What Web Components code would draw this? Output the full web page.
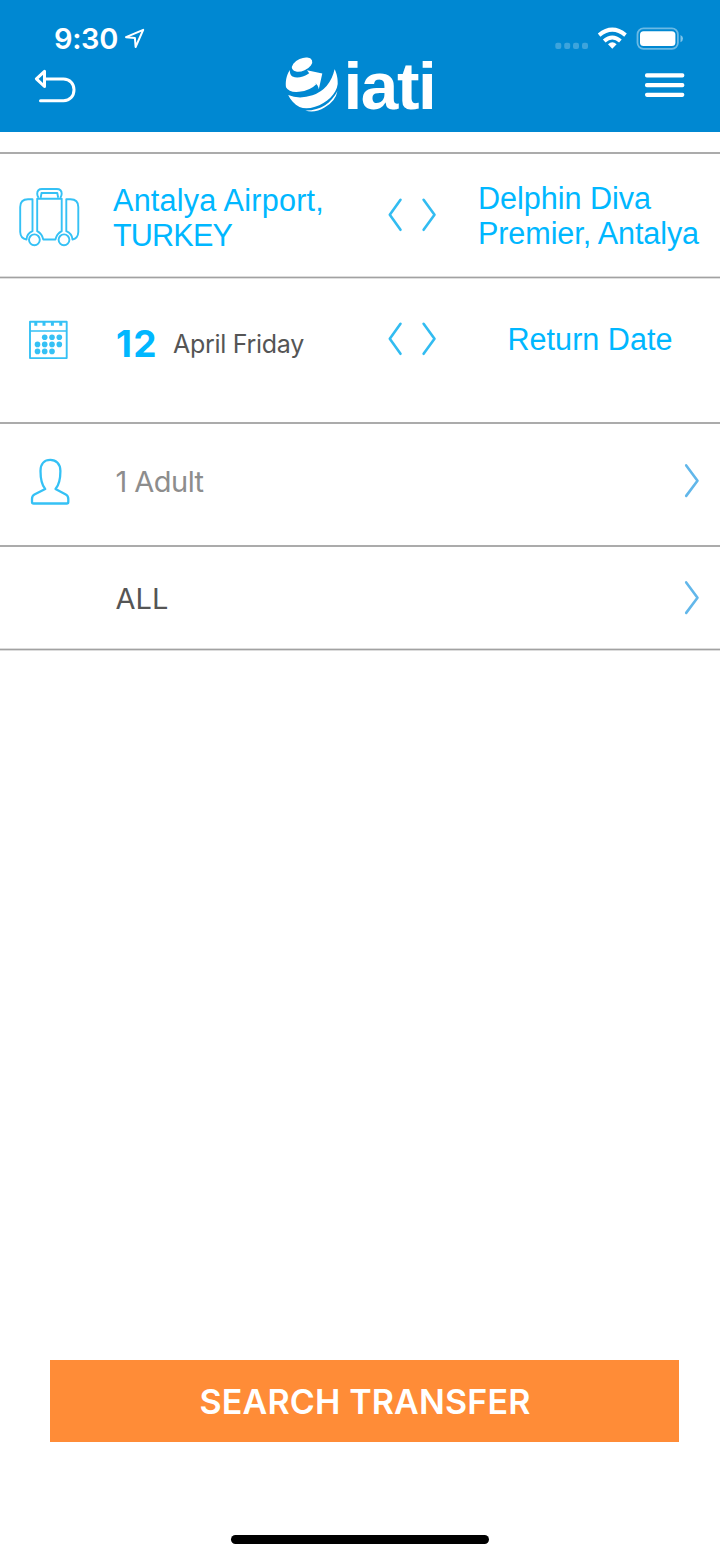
<!DOCTYPE html>
<html lang="en"><head><meta charset="utf-8"><title>iati transfer</title>
<style>html,body{margin:0;padding:0;background:#fff}</style></head><body>
<transfer-page></transfer-page>
<script>
const define=(name,html,ready)=>customElements.define(name,class extends HTMLElement{
  constructor(){super();this.attachShadow({mode:'open'}).innerHTML=html;}
  connectedCallback(){ready&&ready.call(this);}
});

// Label whose tracking is adjusted so that each line has a given advance width.
define('fit-label',`<style>:host{display:block;white-space:nowrap}span{display:inline-block}</style><span><slot></slot></span>`,function(){
  const s=this.shadowRoot.querySelector('span'),w=+this.getAttribute('width'),n=this.textContent.length;
  s.style.letterSpacing=(w-s.getBoundingClientRect().width)/n+'px';
});

define('status-bar',`<style>
:host{display:flex;height:56px;color:#fff;font:600 29px/40px Inter,sans-serif;padding-left:54px;box-sizing:border-box}
fit-label{margin-top:19px;width:64px}
svg{display:block}.loc{margin:27px 0 0 6px}.right{margin:24px 0 0 auto}
</style><fit-label width="64">9:30</fit-label>
<svg class="loc" width="22" height="24" viewBox="124 27 22 24"><path d="M126 37.2 143.2 29.8 135.6 47 134.9 37.9Z" fill="none" stroke="#fff" stroke-width="2" stroke-linejoin="round"/></svg>
<svg class="right" width="170" height="30" viewBox="550 24 170 30">
<g fill="#fff" fill-opacity=".24"><rect x="555.3" y="42.8" width="6" height="6.2" rx="2"/><rect x="564.2" y="42.8" width="6" height="6.2" rx="2"/><rect x="573" y="42.8" width="6" height="6.2" rx="2"/><rect x="582" y="42.8" width="6" height="6.2" rx="2"/></g>
<g fill="none" stroke="#fff" stroke-width="4"><path d="M599.1 35.1Q612.3 24.2 625.5 35.1"/><path d="M604.2 41Q612.3 34 620.4 41"/></g><path d="M608 44.2Q612.3 40.5 616.6 44.2L612.3 48.8Z" fill="#fff"/>
<rect x="637.5" y="28.4" width="40.4" height="20.4" rx="6" fill="none" stroke="#fff" stroke-opacity=".42" stroke-width="1.8"/><rect x="640" y="31.2" width="35.4" height="14.8" rx="3.5" fill="#fff"/><path d="M680.5 35Q683 36 683 38.5T680.5 42.3Z" fill="#fff" fill-opacity=".5"/>
</svg>`);

define('iati-logo',`<style>:host{display:flex;color:#fff;font:700 67.5px/76px "Liberation Sans",sans-serif}svg{display:block}fit-label{margin:-6px 0 0 3.5px}</style>
<svg width="56" height="60" viewBox="284 54 56 60" fill="#fff">
<ellipse cx="302.1" cy="64.7" rx="10.8" ry="6.2" transform="rotate(-24 302.1 64.7)"/>
<path d="M289.8 70C286 76 285.4 82.5 286 87.2Q289 92.8 299 91.8Q310 90.7 316.3 84.2L314.3 82.2Q318.2 84.8 318.8 89.2L322.3 73.6L307 70.2L309.2 73.2Q299.5 79.5 292.5 76.6Q289.6 74.8 289.8 70Z"/>
<path d="M334.6 69.3C336 72 338 77 337.7 84C336.5 94 327 103 315 106.8Q306 109.8 299.5 107C294.5 104.2 290.2 100 288.2 95Q299 99.6 312.5 95.3Q330 89.3 334.6 69.3Z"/>
<path d="M337.5 91Q335.5 101.5 324.5 107.5C318.5 111.2 311.5 112.6 305.3 110.5C321 110.7 331 103 337.5 91Z"/>
</svg><fit-label width="92">iati</fit-label>`);

define('app-header',`<style>:host{display:block;height:132px;background:#0088d2;overflow:hidden}
.nav{display:grid;grid-template-columns:34px 44px 206px 1fr 42px 34px;height:76px}
svg{display:block}.back{margin-top:11px}iati-logo{margin-top:-2px}.menu{margin-top:15px}
</style><status-bar></status-bar><div class="nav"><i></i>
<svg class="back" width="44" height="38" viewBox="34 66.5 44 38" fill="none" stroke="#fff" stroke-width="3" stroke-linecap="round" stroke-linejoin="round"><path d="M44.5 70.8V86L36.4 78.4ZM45 78.6H63.5C70 78.6 74 83.5 74 89.3C74 95.5 70 100.2 63.5 100.2H40.5"/></svg>
<i></i><iati-logo></iati-logo>
<svg class="menu" width="42" height="30" viewBox="644 71 42 30" fill="#fff"><rect x="645" y="73.3" width="39.3" height="4.2" rx="1.8"/><rect x="645" y="83" width="39.3" height="4.2" rx="1.8"/><rect x="645" y="92.7" width="39.3" height="4.2" rx="1.8"/></svg></div>`);

// A form row: icon column, main column, then an optional arrow and trailing column.
define('form-row',`<style>:host{display:grid;grid-template-columns:113px 270px 95px 242px;box-sizing:border-box;border-top:2px solid #ababab;align-items:start;font:30.6px/35px "Liberation Sans",sans-serif;color:#00b7ff}
:host([simple]){grid-template-columns:113px 1fr 40px}::slotted(*){display:block}
</style><slot></slot>`);

const arrow=(d,w,c,vb,h)=>`<style>:host{display:block}svg{display:block}</style><svg width="${w}" height="${h}" viewBox="${vb}" fill="none" stroke="${c}" stroke-width="2.6" stroke-linecap="round" stroke-linejoin="round"><path d="${d}"/></svg>`;
define('swap-arrows',arrow('M400.5 199.8 389.8 214.8 400.5 229.8M423.6 199.8 434.5 214.8 423.6 229.8',54,'#32bcf1','383 196 54 38',38));
define('row-chevron',arrow('M686.2 465.4 697.5 480.8 686.2 495.9',20,'#62b7ea','682 462 20 38',38));

const icon=(w,h,vb,body)=>`<style>:host{display:block}svg{display:block}</style><svg width="${w}" height="${h}" viewBox="${vb}" fill="none" stroke="#35c1f5" stroke-width="1.9" stroke-linejoin="round">${body}</svg>`;
define('luggage-icon',icon(64,62,'18 186 64 62',`
<path d="M37.2 198.8H61.7V231.2Q56.8 233.8 55.4 239.5H43.3Q42 233.8 37.2 231.2Z"/>
<path d="M38.6 197.8Q37.2 196 37.2 193.8Q37.2 189 42 189H56.8Q61.7 189 61.7 193.8Q61.7 196 60.2 197.8M40.7 197.8 41.5 193H57.3L58.2 197.8"/>
<path d="M32.5 199.2H28Q20.2 199.2 20.2 207V232Q20.5 238.5 26.5 239.5Q26.8 233.5 32.5 231.2Z"/>
<path d="M66.3 199.2H70.5Q78.3 199.2 78.3 207V232Q78 238.5 72.5 239.5Q72 233.5 66.3 231.2Z"/>
<circle cx="34.4" cy="239.8" r="5.4"/><circle cx="64" cy="239.8" r="5.4"/>`));
define('calendar-icon',icon(42,42,'28 319 42 42',`
<rect x="30" y="321.7" width="36.7" height="36.4"/><path d="M30 331H66.7" stroke-width="1.5"/>
<path d="M35.8 322V325.7M44 322V325.7M52.4 322V325.7M60.8 322V325.7" stroke-width="3"/>
<g fill="#35c1f5" stroke="none"><circle cx="44.7" cy="337.2" r="2.8"/><circle cx="52" cy="337.2" r="2.8"/><circle cx="59.3" cy="337.2" r="2.8"/><circle cx="37.5" cy="344.4" r="2.8"/><circle cx="44.7" cy="344.4" r="2.8"/><circle cx="52" cy="344.4" r="2.8"/><circle cx="59.3" cy="344.4" r="2.8"/><circle cx="37.5" cy="351.4" r="2.8"/><circle cx="44.7" cy="351.4" r="2.8"/><circle cx="52" cy="351.4" r="2.8"/></g>`));
define('person-icon',icon(42,50,'29 457 42 50',`<path stroke-width="2.3" d="M45.2 489Q40.5 483.5 40.5 471C40.5 464 44.5 459.9 50.3 459.9S60.4 464 60.4 471Q60.4 483.5 55.5 489L65.8 494.5Q68.3 495.8 68.3 499V502Q68.3 503.5 66.8 503.5H33.6Q32 503.5 32 502V499Q32 495.8 34.4 494.5Z"/>`));

define('search-button',`<style>:host{display:block}button{display:flex;justify-content:center;align-items:center;width:100%;height:100%;border:0;padding:2px 0 0 1px;background:#ff8c37;color:#fff;font:600 34px/40px Inter,sans-serif}</style><button><fit-label width="331">SEARCH TRANSFER</fit-label></button>`);

define('transfer-page',`<style>
:host{display:flex;flex-direction:column;width:720px;height:1558px;background:#fff;overflow:hidden}
form-row{flex:none}.route{height:125px;margin-top:20px}.date{height:145px;border-top:1px solid #a2a2a2;box-shadow:0 -1px #dcdcdc,inset 0 1px #e0e0e0}.people{height:123px}.type{height:104px}
.day{display:flex;font-family:Inter,sans-serif;padding:46px 0 0 3px}
.num{font-size:37px;line-height:40px;font-weight:700;width:57px}.month{font-size:25px;line-height:40px;color:#555}
.inter{font-family:Inter,sans-serif;font-size:29px;line-height:40px}
.end{height:1px;background:#a2a2a2;box-shadow:0 -1px #dcdcdc,0 1px #dcdcdc;flex:none}
search-button{margin:710px 41px 0 50px;height:82px;flex:none}
.home{width:258px;height:9px;border-radius:5px;background:#000;margin:93px 0 0 231px;flex:none}
</style><app-header></app-header>
<form-row class="route"><luggage-icon style="margin:32px 0 0 18px"></luggage-icon><div style="padding-top:29px"><fit-label width="211">Antalya Airport,</fit-label><fit-label width="119">TURKEY</fit-label></div><swap-arrows style="margin-top:42px"></swap-arrows><div style="margin-top:27px"><fit-label width="173">Delphin Diva</fit-label><fit-label width="221">Premier, Antalya</fit-label></div></form-row>
<form-row class="date"><calendar-icon style="margin:41px 0 0 28px"></calendar-icon><div class="day"><fit-label class="num" width="42">12</fit-label><fit-label class="month" width="131">April Friday</fit-label></div><swap-arrows style="margin-top:42px"></swap-arrows><fit-label style="margin:44px 0 0 29.5px" width="165">Return Date</fit-label></form-row>
<form-row simple class="people"><person-icon style="margin:33px 0 0 29px"></person-icon><fit-label class="inter" style="color:#8d8d8d;margin:38px 0 0 2.5px" width="88">1 Adult</fit-label><row-chevron style="margin:38px 0 0 2px"></row-chevron></form-row>
<form-row simple class="type"><span></span><fit-label class="inter" style="color:#555;margin:31.5px 0 0 2.5px" width="53">ALL</fit-label><row-chevron style="margin:32px 0 0 2px"></row-chevron></form-row>
<div class="end"></div>
<search-button></search-button><div class="home"></div>`);
</script></body></html>
